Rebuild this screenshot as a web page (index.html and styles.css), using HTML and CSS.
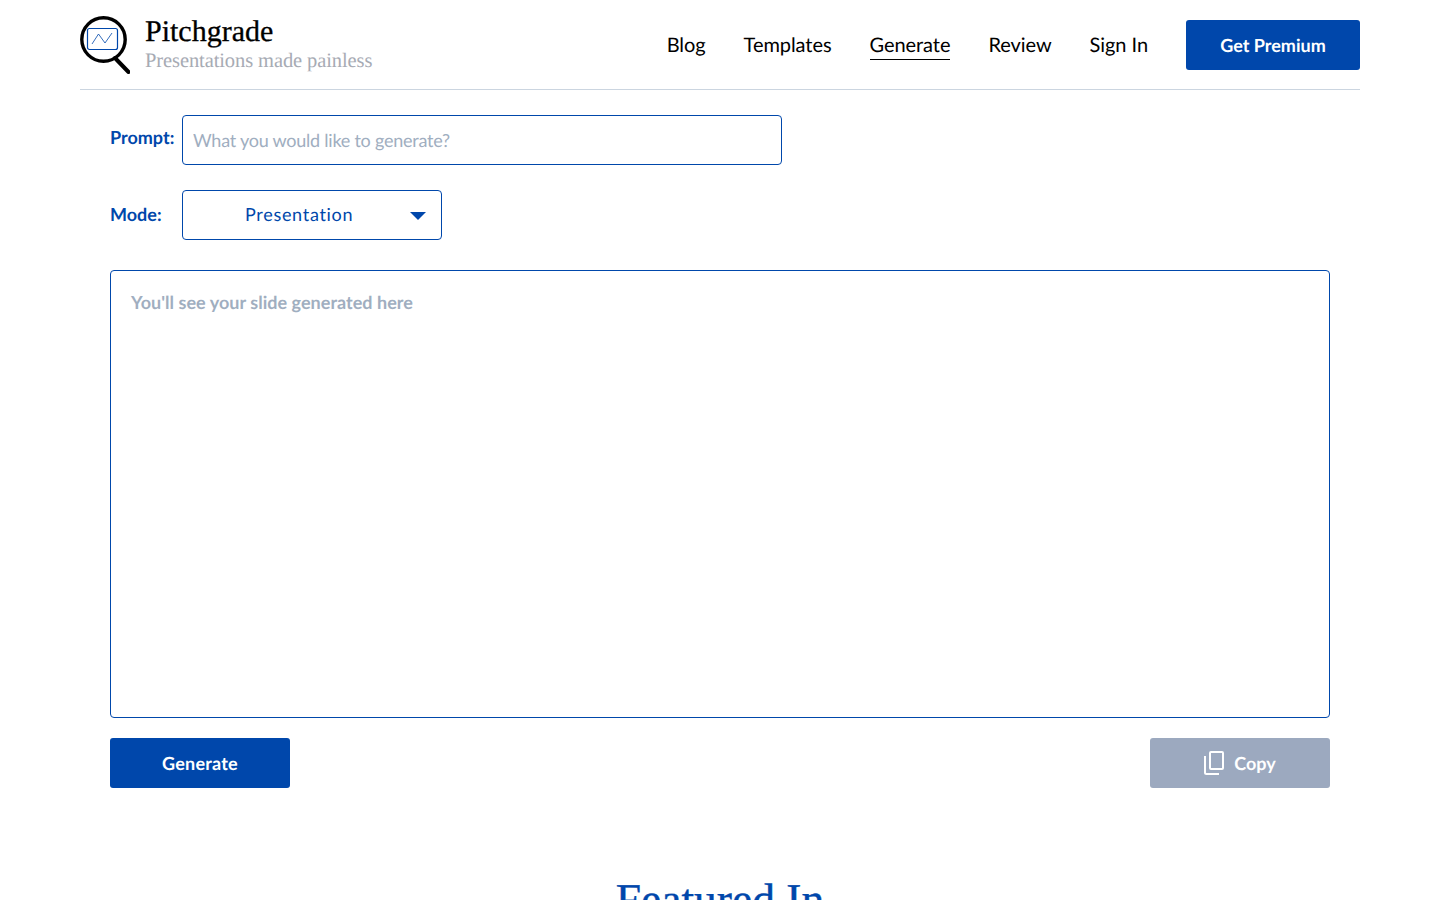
FILE: index.html
```html
<!DOCTYPE html>
<html lang="en">
<head>
<meta charset="utf-8">
<title>Pitchgrade</title>
<link rel="stylesheet" href="styles.css">
</head>
<body>
<header class="header">
  <a class="brand" href="#">
    <svg class="logo" width="50" height="58" viewBox="0 0 50 58" fill="none">
      <circle cx="23.500" cy="23.500" r="21.700" stroke="#000" stroke-width="3.400"/>
      <path d="M35 42L48.500 56" stroke="#000" stroke-width="4" stroke-linecap="round"/>
      <rect x="7.500" y="12.500" width="30" height="21" rx="2" stroke="#0047ab" stroke-width="1.200"/>
      <path d="M12 28L18.500 18L25 27L32 17" stroke="#0047ab" stroke-width="0.800"/>
    </svg>
    <span class="brand-text">
      <span class="brand-name">Pitchgrade</span>
      <span class="brand-tag">Presentations made painless</span>
    </span>
  </a>
  <nav class="nav">
    <a href="#">Blog</a>
    <a href="#">Templates</a>
    <a href="#" class="active">Generate</a>
    <a href="#">Review</a>
    <a href="#">Sign In</a>
    <a href="#" class="btn premium">Get Premium</a>
  </nav>
</header>
<main class="main">
  <div class="field prompt-field">
    <label class="label prompt-label" for="prompt">Prompt:</label>
    <input id="prompt" class="input" placeholder="What you would like to generate?">
  </div>
  <div class="field mode-field">
    <span class="label mode-label">Mode:</span>
    <div class="select">
      <span class="select-value">Presentation</span>
      <span class="caret"></span>
    </div>
  </div>
  <div class="output">You'll see your slide generated here</div>
  <div class="actions">
    <button class="btn generate">Generate</button>
    <button class="btn copy">
      <svg width="20" height="24" viewBox="0 0 20 24" fill="none" stroke="#fff" stroke-width="2">
        <rect x="6" y="1" width="13" height="17" rx="1"/>
        <path d="M1 5V21.500A1.500 1.500 0 0 0 2.500 23H15"/>
      </svg>
      Copy
    </button>
  </div>
</main>
<section class="featured">
  <h2>Featured In</h2>
</section>
</body>
</html>
```
FILE: styles.css
```css
* { box-sizing: border-box; }
html, body { margin: 0; height: 900px; overflow: hidden; }
body { font-family: Lato, sans-serif; color: #000; background: #fff; text-rendering: geometricPrecision; }
a { text-decoration: none; color: inherit; }

.header {
  margin: 0 80px;
  height: 90px;
  border-bottom: 1px solid #cbd5e0;
  display: flex;
  align-items: center;
  justify-content: space-between;
}
.brand { display: flex; align-items: flex-start; gap: 15px; height: 58px; }
.logo { display: block; }
.brand-text { display: flex; flex-direction: column; font-family: "Liberation Serif", serif; padding-top: 1px; }
.brand-name { font-size: 30px; line-height: 30px; -webkit-text-stroke: 0.3px #000; }
.brand-tag { font-size: 20.500px; line-height: 26px; color: #a7abb4; letter-spacing: -0.1px; margin-top: 1px; }

.nav { display: flex; align-items: center; gap: 38px; font-size: 20px; letter-spacing: -0.06px; }
.nav .active { border-bottom: 1px solid #000; padding-bottom: 2px; margin-top: 3px; }
.btn {
  font-family: Lato, sans-serif;
  font-size: 18px;
  font-weight: 700;
  color: #fff;
  border: 0;
  border-radius: 3px;
  display: flex;
  align-items: center;
  justify-content: center;
  height: 50px;
  text-rendering: geometricPrecision;
}
.nav .premium { background: #0047ab; width: 174px; color: #fff; letter-spacing: 0; }

.main { margin: 0 110px; }
.field { display: flex; align-items: center; }
.prompt-field { margin-top: 25px; }
.mode-field { margin-top: 25px; }
.label { width: 72px; font-size: 18px; font-weight: 700; color: #0047ab; }
.prompt-label { margin-top: -6px; }
.mode-label { margin-top: -2px; }
.input {
  width: 600px;
  height: 50px;
  border: 1px solid #0047ab;
  border-radius: 4px;
  padding: 0 10px;
  font-family: Lato, sans-serif;
  font-size: 18px;
  letter-spacing: -0.23px;
  text-rendering: geometricPrecision;
  outline: none;
}
.input::placeholder { color: #a0aec0; opacity: 1; }
.select {
  width: 260px;
  height: 50px;
  border: 1px solid #0047ab;
  border-radius: 4px;
  display: flex;
  align-items: center;
  position: relative;
  color: #0047ab;
  font-size: 18px;
  letter-spacing: 0.700px;
}
.select-value { margin-left: 62px; margin-top: -2px; }
.caret {
  position: absolute;
  right: 15px;
  top: 21px;
  width: 0;
  height: 0;
  border-left: 8px solid transparent;
  border-right: 8px solid transparent;
  border-top: 8px solid #0047ab;
}
.output {
  margin-top: 30px;
  height: 448px;
  border: 1px solid #0047ab;
  border-radius: 4px;
  padding: 20px;
  font-size: 18px;
  line-height: 22px;
  font-weight: 700;
  color: #a0aec0;
  letter-spacing: 0.03px;
}
.actions { margin-top: 20px; display: flex; justify-content: space-between; }
.generate { background: #0047ab; width: 180px; letter-spacing: 0.2px; }
.copy { background: #9ca9bf; width: 180px; gap: 10px; }

.featured { margin-top: 87px; text-align: center; }
.featured h2 {
  margin: 0;
  font-family: "Liberation Serif", serif;
  font-size: 45.500px;
  line-height: 50px;
  font-weight: 400;
  color: #0047ab;
  -webkit-text-stroke: 0.4px #0047ab;
}
```
